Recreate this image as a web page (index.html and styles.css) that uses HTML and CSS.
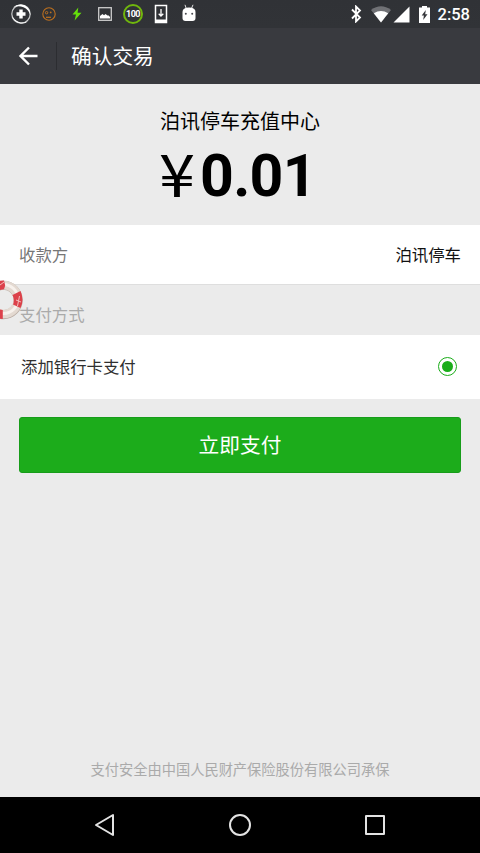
FILE: index.html
```html
<!DOCTYPE html>
<html lang="zh-CN">
<head>
<meta charset="utf-8">
<title>确认交易</title>
<link rel="stylesheet" href="styles.css">
</head>
<body>
<div class="screen">
  <div class="status">
    <div class="notifications">
      <svg width="20" height="20" viewBox="0 0 20 20"><circle cx="10" cy="10" r="9.2" fill="none" stroke="#c9cacb" stroke-width="1.2"/><path d="M2 3.5A10 10 0 0 1 10 .5 9.5 9.5 0 0 1 19.2 11C18 7 16 5 12.500 3.300 9 1.800 5 2 2 3.500ZM18 16.500A10 10 0 0 1 1 11c1 3.500 3.500 5.500 7 7 3.500 1.200 7 .500 10-1.500Z" fill="#fff"/><path d="M10 5.500v9M5.500 10h9" stroke="#fff" stroke-width="3.400"/></svg>
      <svg width="14" height="14" viewBox="0 0 14 14"><g fill="none" stroke="#bd701f"><circle cx="7" cy="7" r="6.200" stroke-width="1.100"/><circle cx="4.600" cy="5.700" r="1.200"/><path d="M4 10.300h5" stroke-width="1.200"/></g><circle cx="8.700" cy="5.400" r=".9" fill="#bd701f"/></svg>
      <svg width="10" height="14" viewBox="0 0 10 14"><path d="M6.300.500.500 7.500H4L2.600 13.500 9.500 5.700H5.600Z" fill="#65df0b"/></svg>
      <svg width="14" height="14" viewBox="0 0 14 14"><rect x=".7" y=".7" width="12.600" height="12.600" fill="none" stroke="#ccc" stroke-width="1.300"/><path d="M2 11.500V9l2.500-2 1.500 1.200L7.500 7l2 1.500h1.200L12 10v1.500Z" fill="#fff"/></svg>
      <span class="score">100</span>
      <svg width="14" height="20" viewBox="0 0 14 20"><path d="M1.500 1.500h11v17h-11Z" fill="none" stroke="#fff" stroke-width="1.500"/><path d="M1 15.500h12v3.500H1Z" fill="#fff"/><path d="M7 5v7M4.700 9.700 7 12l2.300-2.300" fill="none" stroke="#fff" stroke-width="1.300"/></svg>
      <svg width="14" height="18" viewBox="0 0 14 18"><path d="m3 .8 1.300 4M11 .8 9.700 4" stroke="#ddd" stroke-width="1"/><path d="M.5 8q0-4.500 6.500-4.500T13.500 8v6q0 3-3 3h-7q-3 0-3-3Z" fill="#fff"/><circle cx="3.800" cy="9.700" r="1" fill="#4a4b50"/><circle cx="10.200" cy="9.700" r="1" fill="#4a4b50"/></svg>
    </div>
    <div class="system">
      <svg class="bt" width="11" height="18" viewBox="0 0 11 18"><path d="m1 4.500 8 8-4 4v-15l4 4-8 8" fill="none" stroke="#fff" stroke-width="1.800"/></svg>
      <svg class="wifi" width="20" height="17" viewBox="0 0 20 17"><path d="M0 4Q10-3.500 20 4L10 16.500Z" fill="#707175"/><path d="M2.800 7.200Q10 2.600 17.200 7.200L10 16.500Z" fill="#fff"/></svg>
      <svg class="signal" width="17" height="17" viewBox="0 0 17 17"><path d="M.5 16.500 16.500.5v16Z" fill="#fff"/></svg>
      <svg class="battery" width="11" height="17" viewBox="0 0 11 17"><path d="M3 0h5v1.500H11V17H0V1.500h3Z" fill="#fff"/><path d="M6.800 4 2.700 9.600h2.200L4.200 14 8.500 8.200H6.200Z" fill="#36373c"/></svg>
      <span class="clock">2:58</span>
    </div>
  </div>
  <header class="appbar">
    <svg class="back" width="20" height="20" viewBox="0 0 20 20"><path d="M19.500 10H3M11 1.500 2.500 10l8.500 8.500" fill="none" stroke="#fff" stroke-width="2.400"/></svg>
    <h1 class="title">确认交易</h1>
  </header>
  <main class="content">
    <section class="summary">
      <div class="merchant">泊讯停车充值中心</div>
      <div class="price"><span class="yen">¥</span><span class="amount">0.01</span></div>
    </section>
    <div class="row payee"><span class="label">收款方</span><span class="value">泊讯停车</span></div>
    <div class="section-label">支付方式</div>
    <div class="row method"><span class="method-name">添加银行卡支付</span><span class="radio"></span></div>
    <button class="pay">立即支付</button>
    <footer class="insurance">支付安全由中国人民财产保险股份有限公司承保</footer>
    <svg class="lifebuoy" width="23" height="40" viewBox="0 0 23 40">
      <circle cx="3.500" cy="20" r="14.700" fill="none" stroke="#b9aca3" stroke-width="9"/>
      <circle cx="3.500" cy="19.500" r="14.500" fill="none" stroke="#e3d9d1" stroke-width="8.600"/>
      <circle cx="3.500" cy="19" r="14.500" fill="none" stroke="#f7f1ec" stroke-width="3"/>
      <path d="M0 .8 4 .5 5.200 5.500 4 9.200 0 10ZM12.500 15 20.500 11Q24.500 20 20.500 28L13 24.500Q14.800 20 12.500 15ZM0 29.500l2.800.5v9L0 38.700Z" fill="#dc414a"/>
      <path d="m0 5 4-3M16 20l5 2M19.500 16l-2 10" stroke="#f3bcb9" stroke-width="1"/>
    </svg>
  </main>
  <nav class="navbar">
    <svg width="24" height="24" viewBox="0 0 24 24"><path d="M3 12 20 2v20Z"/></svg>
    <svg width="24" height="24" viewBox="0 0 24 24"><circle cx="12" cy="12" r="10"/></svg>
    <svg width="24" height="24" viewBox="0 0 24 24"><rect x="3" y="3" width="18" height="18"/></svg>
  </nav>
</div>
</body>
</html>
```
FILE: styles.css
```css
* { box-sizing: border-box; }
body { margin: 0; font-family: Roboto, "Noto Sans CJK SC", sans-serif; }
.screen { width: 480px; height: 853px; display: flex; flex-direction: column; background: #ebebeb; overflow: hidden; }
svg { display: block; flex: none; }
.status { height: 28px; flex: none; display: flex; justify-content: space-between; align-items: center; padding: 0 10px 0 11px; background: linear-gradient(#303236, #313337); }
.notifications { display: flex; align-items: center; }
.notifications > :nth-child(2) { margin-left: 11px; }
.notifications > :nth-child(3) { margin-left: 16px; }
.notifications > :nth-child(4) { margin-left: 16px; }
.score { width: 20px; height: 20px; margin-left: 11px; border: 2px solid #70b70d; border-radius: 50%; color: #fff; font-size: 9px; font-weight: 700; line-height: 17px; display: flex; justify-content: center; letter-spacing: -.5px; }
.notifications > :nth-child(6) { margin-left: 11px; }
.notifications > :nth-child(7) { margin-left: 14px; margin-top: -3px; }
.system { display: flex; align-items: center; }
.wifi { margin-left: 9px; }
.signal { margin-left: 2px; }
.battery { margin-left: 9px; }
.clock { margin-left: 8px; color: #fff; font-size: 16.500px; font-weight: 500; line-height: 20px; margin-top: 2px; }
.appbar { height: 56px; flex: none; display: flex; align-items: center; padding-left: 18px; background: #393a3f; }
.title { height: 28px; margin: 0 0 0 18px; padding-left: 14px; border-left: 1px solid #2c2d31; color: #fff; font-size: 20.700px; font-weight: 400; line-height: 30px; }
.content { position: relative; flex: 1; display: flex; flex-direction: column; }
.summary { height: 141px; padding-top: 23px; display: flex; flex-direction: column; align-items: center; color: #000; }
.merchant { font-size: 20px; line-height: 30px; }
.price { display: flex; height: 76px; width: 160px; padding-top: 1px; font-size: 59px; font-weight: 700; line-height: 76px; }
.yen { width: 40px; font-family: "Noto Sans CJK SC", sans-serif; font-weight: 400; transform: translate(-1px, -4px) scaleX(1.1); transform-origin: left center; }
.amount { letter-spacing: -.7px; }
.row { display: flex; justify-content: space-between; align-items: center; background: #fff; font-size: 16.400px; }
.payee { height: 60px; padding: 0 19px 2px; border-bottom: 1px solid #dedede; }
.label { color: #777; }
.value { color: #111; }
.section-label { height: 50px; padding: 17px 19px 0; color: #aaa; font-size: 16.400px; line-height: 28px; }
.method { height: 64px; padding: 0 23px 0 21px; color: #303030; }
.method-name { margin-bottom: 2px; }
.radio { width: 19px; height: 19px; border: 1.500px solid #1aad19; border-radius: 50%; display: flex; align-items: center; justify-content: center; margin-bottom: 1px; }
.radio::before { content: ""; width: 11px; height: 11px; border-radius: 50%; background: #1aad19; }
.pay { height: 56px; margin: 18px 19px 0; padding: 0 0 2px; border: 1px solid #179c1a; border-radius: 3px; background: #1cac1b; color: #fff; font-family: inherit; font-size: 20.700px; }
.insurance { margin-top: auto; padding-bottom: 16px; text-align: center; color: #aaa; font-size: 14.240px; line-height: 22px; }
.lifebuoy { position: absolute; left: 0; top: 196px; }
.navbar { height: 56px; flex: none; display: flex; align-items: center; justify-content: space-between; padding: 0 93px; background: #000; }
.navbar svg { fill: none; stroke: #e3e3e3; stroke-width: 2; stroke-linejoin: round; }
```
